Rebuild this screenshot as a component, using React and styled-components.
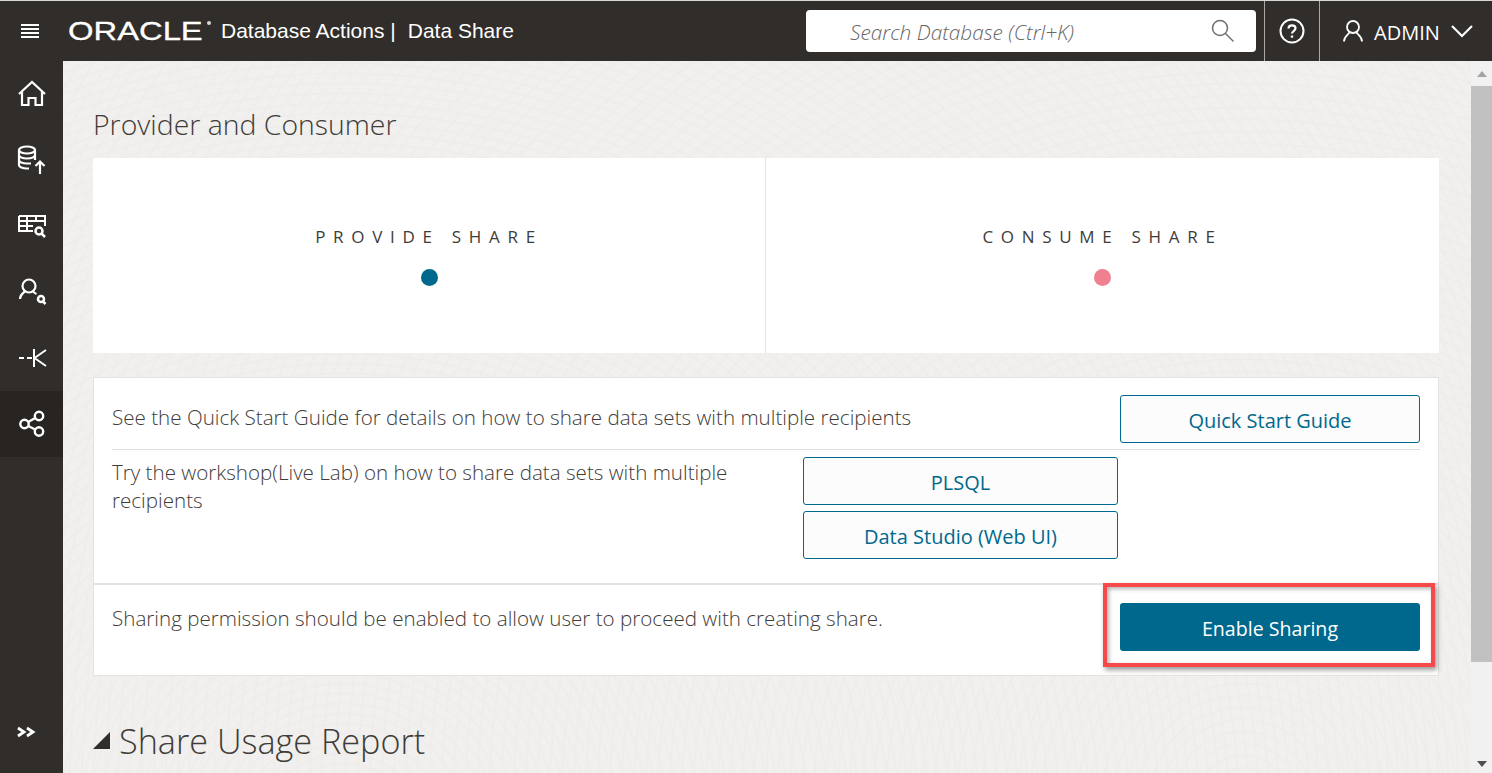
import React from 'react'
import styled, { createGlobalStyle } from 'styled-components'

const GlobalStyle = createGlobalStyle`
   html, body {
      margin: 0;
      height: 100%;
      overflow: hidden;
   }
   body {
      font-family: 'Open Sans', 'Noto Sans', sans-serif;
   }
`

const HomeIcon = () => (
   <svg width="30" height="28" viewBox="0 0 30 28" fill="none" stroke="currentColor" strokeWidth="2.2">
      <path d="M2 14 15 2l13 12" />
      <path d="M5 11.500V25h6.500v-7h7v7H25V11.500" />
   </svg>
)

const DataLoadIcon = () => (
   <svg width="30" height="30" viewBox="0 0 30 30" fill="none" stroke="currentColor" strokeWidth="2.2">
      <ellipse cx="10" cy="5" rx="8" ry="3.500" />
      <path d="M2 5v15c0 2 3.500 3.500 8 3.500h2M18 5v10M2 10c0 2 3.500 3.500 8 3.500s8-1.500 8-3.500M2 15c0 2 3.500 3.500 8 3.500h4" />
      <path d="M23 29V17M18.500 21 23 16.500l4.500 4.500" />
   </svg>
)

const TableSearchIcon = () => (
   <svg width="30" height="26" viewBox="0 0 30 26" fill="none" stroke="currentColor" strokeWidth="2">
      <path d="M2 3h26v10M2 3v15h14M2 8h26M2 13h14M10 3v15M19 3v6" />
      <circle cx="22" cy="18" r="3.500" strokeWidth="2.500" />
      <path d="m24.500 20.500 3.500 3.500" strokeWidth="2.500" />
   </svg>
)

const UserSearchIcon = () => (
   <svg width="30" height="30" viewBox="0 0 30 30" fill="none" stroke="currentColor" strokeWidth="2.2">
      <circle cx="12" cy="9" r="6.500" />
      <path d="M8 14c-1 2-5 3-5 8M16 14c.5 1.500 2 2.500 3.500 3" />
      <circle cx="24" cy="22" r="3" strokeWidth="2.500" />
      <path d="m26 24.500 2.500 2.500" strokeWidth="2.500" />
   </svg>
)

const LoadKeyIcon = () => (
   <svg width="30" height="22" viewBox="0 0 30 22" fill="none" stroke="currentColor" strokeWidth="2">
      <path d="M2 11h5M10 11h5M17 2v18M17.500 11 29 3M17.500 11 29 19" />
   </svg>
)

const ShareIcon = () => (
   <svg width="28" height="28" viewBox="0 0 28 28" fill="none" stroke="currentColor" strokeWidth="2.4">
      <circle cx="6.500" cy="14" r="4.200" />
      <circle cx="21" cy="6" r="4.200" />
      <circle cx="21" cy="21.500" r="4.200" />
      <path d="m10.200 12 7-4M10.200 16l7 3.500" />
   </svg>
)

const ExpandIcon = () => (
   <svg width="20" height="12" viewBox="0 0 20 12" fill="none" stroke="currentColor" strokeWidth="2.800">
      <path d="m2 2 6 4-6 4M11 2l6 4-6 4" />
   </svg>
)

const SearchIcon = () => (
   <svg width="26" height="26" viewBox="0 0 26 26" fill="none" stroke="#6f6f6f" strokeWidth="1.500">
      <circle cx="10" cy="10" r="7.500" />
      <path d="m15.500 15.500 8 8" />
   </svg>
)

const HelpIcon = () => (
   <svg width="26" height="26" viewBox="0 0 26 26" fill="none" stroke="currentColor" strokeWidth="2">
      <circle cx="13" cy="13" r="11.500" />
      <path d="M9.500 10.500c0-2 1.500-3.200 3.500-3.200s3.500 1.200 3.500 3c0 2.700-3.500 2.700-3.500 5.200" strokeWidth="2.200" />
      <path d="M13 17.500v2.200" strokeWidth="2.400" />
   </svg>
)

const UserIcon = () => (
   <svg width="22" height="24" viewBox="0 0 22 24" fill="none" stroke="currentColor" strokeWidth="1.800">
      <circle cx="11" cy="8" r="6" />
      <path d="M7.500 13c-.5 3-5.500 3.500-5.500 9.500M14.500 13c.5 3 5.500 3.500 5.500 9.500" />
   </svg>
)

const ChevronIcon = () => (
   <svg width="24" height="14" viewBox="0 0 24 14" fill="none" stroke="currentColor" strokeWidth="2.200">
      <path d="m2 2 10 10L22 2" />
   </svg>
)

const navItems = [
   { id: 'home', icon: <HomeIcon /> },
   { id: 'load', icon: <DataLoadIcon /> },
   { id: 'catalog', icon: <TableSearchIcon /> },
   { id: 'insights', icon: <UserSearchIcon /> },
   { id: 'transforms', icon: <LoadKeyIcon /> },
   { id: 'share', icon: <ShareIcon />, active: true },
]

const App = () => {
   return (
      <Page>
         <GlobalStyle />
         <Header>
            <Burger>
               <span />
               <span />
               <span />
               <span />
            </Burger>
            <Logo>
               <LogoWord>ORACLE</LogoWord>
               <LogoMark />
            </Logo>
            <AppTitle>Database Actions |</AppTitle>
            <PageTitle>Data Share</PageTitle>
            <SearchBox>
               <SearchText>Search Database (Ctrl+K)</SearchText>
               <SearchIcon />
            </SearchBox>
            <HelpCell>
               <HelpIcon />
            </HelpCell>
            <UserCell>
               <UserIcon />
               <UserName>ADMIN</UserName>
               <ChevronIcon />
            </UserCell>
         </Header>
         <Body>
            <Sidebar>
               {navItems.map((item) => (
                  <NavItem key={item.id} $active={item.active}>
                     {item.icon}
                  </NavItem>
               ))}
               <ExpandItem>
                  <ExpandIcon />
               </ExpandItem>
            </Sidebar>
            <Content>
               <SectionTitle>Provider and Consumer</SectionTitle>
               <ShareCard>
                  <SharePane>
                     <ShareLabel>PROVIDE SHARE</ShareLabel>
                     <Dot $color="#00688c" />
                  </SharePane>
                  <SharePane>
                     <ShareLabel>CONSUME SHARE</ShareLabel>
                     <Dot $color="#f0808f" />
                  </SharePane>
               </ShareCard>
               <InfoCard>
                  <GuideRow>
                     <InfoText>
                        See the Quick Start Guide for details on how to share
                        data sets with multiple recipients
                     </InfoText>
                     <OutlineButton>Quick Start Guide</OutlineButton>
                  </GuideRow>
                  <WorkshopRow>
                     <WorkshopText>
                        Try the workshop(Live Lab) on how to share data sets
                        with multiple recipients
                     </WorkshopText>
                     <WorkshopButtons>
                        <OutlineButton>PLSQL</OutlineButton>
                        <OutlineButton>Data Studio (Web UI)</OutlineButton>
                     </WorkshopButtons>
                  </WorkshopRow>
                  <EnableRow>
                     <InfoText>
                        Sharing permission should be enabled to allow user to
                        proceed with creating share.
                     </InfoText>
                     <PrimaryButton>Enable Sharing</PrimaryButton>
                     <Highlight />
                  </EnableRow>
               </InfoCard>
               <ReportTitle>
                  <Triangle />
                  Share Usage Report
               </ReportTitle>
            </Content>
            <Scrollbar>
               <ArrowUp />
               <Thumb />
               <ArrowDown />
            </Scrollbar>
         </Body>
      </Page>
   )
}

export default App

const Page = styled.div`
   width: 1492px;
   height: 773px;
   display: flex;
   flex-direction: column;
   overflow: hidden;
   background: #f1f0ee;
`

const Header = styled.header`
   height: 60px;
   flex: none;
   display: flex;
   align-items: center;
   background: #312d2a;
   border-top: 1px solid #d8d8d6;
   color: #fff;
`

const Burger = styled.div`
   width: 18px;
   margin-left: 21px;
   display: flex;
   flex-direction: column;
   gap: 2px;

   span {
      height: 2px;
      background: #fff;
   }
`

const Logo = styled.div`
   width: 142px;
   height: 24px;
   margin-left: 29px;
   display: flex;
   position: relative;
`

const LogoWord = styled.span`
   display: block;
   font-family: 'Liberation Sans', sans-serif;
   font-size: 26px;
   line-height: 24px;
   color: #fff;
   transform: scaleX(1.26);
   transform-origin: left center;
   -webkit-text-stroke: 0.3px #fff;
`

const LogoMark = styled.i`
   position: absolute;
   right: -1px;
   top: 2px;
   width: 4px;
   height: 4px;
   border-radius: 50%;
   background: #d8d8d8;
`

const AppTitle = styled.span`
   margin-left: 11px;
   font-family: 'Liberation Sans', sans-serif;
   font-size: 21px;
   white-space: nowrap;
`

const PageTitle = styled(AppTitle)`
   margin-left: 12px;
`

const SearchBox = styled.div`
   width: 450px;
   height: 42px;
   box-sizing: border-box;
   margin-left: auto;
   padding: 0 20px 0 44px;
   display: flex;
   align-items: center;
   justify-content: space-between;
   background: #fff;
   border-radius: 4px;
`

const SearchText = styled.span`
   padding-top: 2px;
   font-size: 20.800px;
   font-style: italic;
   font-weight: 300;
   color: #666;
`

const HelpCell = styled.div`
   width: 54px;
   height: 60px;
   flex: none;
   margin-left: 8px;
   display: flex;
   align-items: center;
   justify-content: center;
   border-left: 1px solid #aaa8a6;
   border-right: 1px solid #aaa8a6;
`

const UserCell = styled.div`
   width: 172px;
   flex: none;
   box-sizing: border-box;
   padding-left: 22px;
   display: flex;
   align-items: center;
`

const UserName = styled.span`
   margin: 0 10px 0 10px;
   padding-top: 3px;
   font-size: 20px;
`

const Body = styled.div`
   flex: 1;
   min-height: 0;
   display: flex;
`

const Sidebar = styled.nav`
   width: 63px;
   flex: none;
   display: flex;
   flex-direction: column;
   background: #312d2a;
   color: #fff;
`

const NavItem = styled.div`
   height: 66px;
   display: flex;
   align-items: center;
   justify-content: center;
   background: ${({ $active }) => ($active ? '#272421' : 'transparent')};
`

const ExpandItem = styled.div`
   margin-top: auto;
   height: 82px;
   padding-right: 12px;
   display: flex;
   align-items: center;
   justify-content: center;
`

const Content = styled.main`
   flex: 1;
   min-width: 0;
   padding: 0 32px 0 30px;
   background-color: #f1f0ee;
   background-image:
      repeating-radial-gradient(circle at 280px 780px, transparent 0 6px, #eeedeb 7px 8px, transparent 9px 10px),
      repeating-radial-gradient(circle at 1180px 740px, transparent 0 8px, #eeedeb 9px 10px, transparent 11px 12px);
`

const SectionTitle = styled.h2`
   margin: 43px 0 14px;
   height: 40px;
   font-size: 28.400px;
   font-weight: 300;
   line-height: 40px;
   color: #3f3c39;
`

const ShareCard = styled.section`
   height: 195px;
   display: grid;
   grid-template-columns: 672px 1fr;
   background: #fff;
`

const SharePane = styled.div`
   padding-top: 67px;
   display: flex;
   flex-direction: column;
   align-items: center;
   gap: 21px;

   & + & {
      border-left: 1px solid #e4e3e1;
   }
`

const ShareLabel = styled.span`
   font-size: 17px;
   line-height: 23px;
   letter-spacing: 7.700px;
   color: #3f3c39;
`

const Dot = styled.i`
   width: 17px;
   height: 17px;
   border-radius: 50%;
   background: ${({ $color }) => $color};
`

const InfoCard = styled.section`
   margin-top: 24px;
   height: 299px;
   box-sizing: border-box;
   display: flex;
   flex-direction: column;
   background: #fff;
   border: 1px solid #e4e3e1;
`

const InfoText = styled.p`
   margin: 0;
   font-size: 20.600px;
   font-weight: 300;
   line-height: 28px;
   color: #3f3c39;
   white-space: nowrap;
`

const GuideRow = styled.div`
   height: 72px;
   flex: none;
   box-sizing: border-box;
   margin: 0 18px;
   padding-top: 17px;
   display: flex;
   justify-content: space-between;
   border-bottom: 1px solid #dfdfdd;

   ${InfoText} {
      margin-top: 8px;
   }
`

const WorkshopRow = styled.div`
   height: 135px;
   flex: none;
   box-sizing: border-box;
   padding: 7px 0 0 18px;
   display: flex;
   border-bottom: 2px solid #e4e3e1;
`

const WorkshopText = styled(InfoText)`
   width: 691px;
   padding: 1px 65px 0 0;
   box-sizing: border-box;
   white-space: normal;
`

const WorkshopButtons = styled.div`
   width: 315px;
   display: flex;
   flex-direction: column;
   gap: 6px;
`

const OutlineButton = styled.button`
   width: 300px;
   height: 48px;
   padding: 3px 0 0;
   background: #fcfcfc;
   border: 1px solid #00688c;
   border-radius: 3px;
   font-family: inherit;
   font-size: 20px;
   color: #00688c;

   ${WorkshopButtons} & {
      width: 100%;
   }
`

const EnableRow = styled.div`
   flex: 1;
   position: relative;
   padding: 18px 18px 0;
   display: flex;
   justify-content: space-between;

   ${InfoText} {
      margin-top: 1px;
   }
`

const PrimaryButton = styled.button`
   width: 300px;
   height: 48px;
   padding: 3px 0 0;
   background: #00688c;
   border: none;
   border-radius: 3px;
   font-family: inherit;
   font-size: 19.600px;
   color: #fff;
`

const Highlight = styled.div`
   position: absolute;
   left: 1009px;
   top: -2px;
   width: 332px;
   height: 84px;
   box-sizing: border-box;
   border: 4px solid #f64a4a;
   box-shadow: 2px 3px 5px rgba(0, 0, 0, 0.4), inset 2px 2px 4px rgba(0, 0, 0, 0.3);
`

const ReportTitle = styled.h2`
   margin: 41px 0 0;
   height: 48px;
   display: flex;
   align-items: center;
   gap: 9px;
   font-size: 34.200px;
   font-weight: 300;
   line-height: 48px;
   color: #3f3c39;
   white-space: nowrap;
`

const Triangle = styled.i`
   width: 0;
   height: 0;
   margin-top: -2px;
   border-left: 17px solid transparent;
   border-bottom: 17px solid #312d2a;
`

const Scrollbar = styled.aside`
   width: 21px;
   flex: none;
   display: flex;
   flex-direction: column;
   align-items: center;
   background: #f1f1f1;
`

const ArrowUp = styled.i`
   width: 0;
   height: 0;
   margin-top: 10px;
   border-left: 5px solid transparent;
   border-right: 5px solid transparent;
   border-bottom: 6px solid #a3a3a3;
`

const Thumb = styled.div`
   width: 21px;
   height: 576px;
   margin-top: 9px;
   background: #c1c1c1;
`

const ArrowDown = styled.i`
   width: 0;
   height: 0;
   margin-top: auto;
   margin-bottom: 6px;
   border-left: 5px solid transparent;
   border-right: 5px solid transparent;
   border-top: 6px solid #505050;
`
